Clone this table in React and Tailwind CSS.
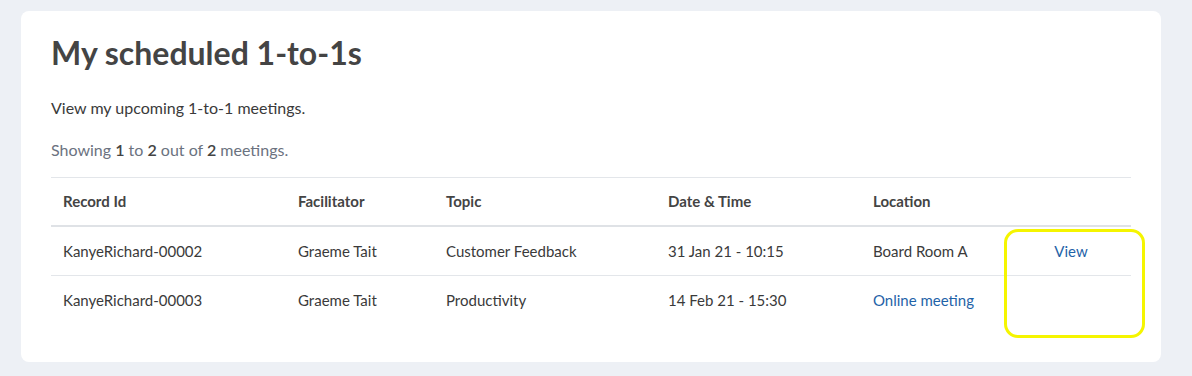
const meetings = [
  { id: "KanyeRichard-00002", facilitator: "Graeme Tait", topic: "Customer Feedback", when: "31 Jan 21 - 10:15", location: "Board Room A", online: false, view: true },
  { id: "KanyeRichard-00003", facilitator: "Graeme Tait", topic: "Productivity", when: "14 Feb 21 - 15:30", location: "Online meeting", online: true, view: false },
];

export default function App() {
  return (
    <div className="min-h-[376px] bg-[#edf0f5] pl-[21px] pr-[31px] pt-[11px] pb-[14px] font-['Lato',sans-serif] text-[#3a3a3a]">
      <div className="rounded-lg bg-white px-[30px] pt-[23px] pb-[37px]">
        <h1 className="text-[32px] font-bold leading-[38px] text-[#444]">My scheduled 1-to-1s</h1>
        <p className="mt-[26px] text-[16px] leading-[20px]">View my upcoming 1-to-1 meetings.</p>
        <p className="mt-[22px] text-[16px] leading-[20px] text-[#6b7280]">
          Showing <span className="font-semibold text-[#444]">1</span> to <span className="font-semibold text-[#444]">2</span> out of{" "}
          <span className="font-semibold text-[#444]">2</span> meetings.
        </p>

        <div className="relative mt-[17px]">
          <table className="w-full border-collapse text-left text-[15px]">
            <thead>
              <tr className="h-[48px] border-y border-t-[#e3e6ea] border-b-2 border-b-[#dfe2e6]">
                <th className="w-[235px] px-3 font-bold text-[#444]">Record Id</th>
                <th className="w-[148px] px-3 font-bold text-[#444]">Facilitator</th>
                <th className="w-[222px] px-3 font-bold text-[#444]">Topic</th>
                <th className="w-[205px] px-3 font-bold text-[#444]">Date &amp; Time</th>
                <th className="w-[150px] px-3 font-bold text-[#444]">Location</th>
                <th className="px-3"></th>
              </tr>
            </thead>
            <tbody>
              {meetings.map((m, i) => (
                <tr key={m.id} className={i === 0 ? "h-[50px] border-b border-[#e3e6ea]" : "h-[49px]"}>
                  <td className="px-3">{m.id}</td>
                  <td className="px-3">{m.facilitator}</td>
                  <td className="px-3">{m.topic}</td>
                  <td className="px-3">{m.when}</td>
                  <td className={m.online ? "px-3 text-[#1f63a8]" : "px-3"}>{m.location}</td>
                  <td className="px-3 text-center text-[#1f63a8]">{m.view ? "View" : ""}</td>
                </tr>
              ))}
            </tbody>
          </table>
          <div className="pointer-events-none absolute left-[953px] top-[52px] h-[109px] w-[141px] rounded-[14px] border-[3px] border-[#f5f500]"></div>
        </div>
      </div>
    </div>
  );
}
